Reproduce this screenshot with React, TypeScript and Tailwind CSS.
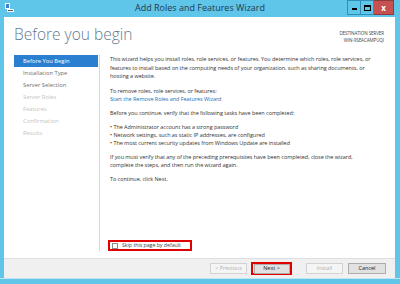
const navItems = [
  { label: "Before You Begin", state: "active" },
  { label: "Installation Type", state: "normal" },
  { label: "Server Selection", state: "normal" },
  { label: "Server Roles", state: "disabled" },
  { label: "Features", state: "disabled" },
  { label: "Confirmation", state: "disabled" },
  { label: "Results", state: "disabled" },
];

const App = () => {
  return (
    <div className="w-[400px] h-[284px] bg-[#5fc5e9] flex flex-col overflow-hidden font-['Open_Sans',sans-serif]">
      {/* Title bar */}
      <div className="h-[17px] flex items-start relative shrink-0">
        <div className="ml-[5px] mt-[3px] w-[9px] h-[9px] relative">
          <div className="absolute left-0 top-0 w-[5px] h-[6px] bg-[#3b7fd0] border border-white"></div>
          <div className="absolute left-[2px] bottom-0 w-[7px] h-[3px] bg-[#555] border border-white"></div>
        </div>
        <div className="absolute left-0 right-0 top-[2px] text-center text-[9px] leading-[12px] text-[#1f3b50]">
          Add Roles and Features Wizard
        </div>
        <div className="ml-auto mr-[6px] flex h-[15px]">
          <div className="w-[14px] h-[15px] border border-[#2f8fb6] flex items-end justify-center pb-[4px]">
            <div className="w-[5px] h-[2px] bg-black"></div>
          </div>
          <div className="w-[13px] h-[15px] border border-l-0 border-[#2f8fb6] flex items-center justify-center">
            <div className="w-[7px] h-[6px] border border-black border-t-2"></div>
          </div>
          <div className="w-[20px] h-[15px] bg-[#c75050] border border-l-0 border-[#8e3a3a] flex items-center justify-center text-[8px] font-bold text-white leading-none">
            x
          </div>
        </div>
      </div>

      {/* Body */}
      <div className="flex-1 ml-[4px] mr-[5px] bg-white flex flex-col min-h-0">
        <div className="flex-1 flex flex-col px-[10px] pt-[7px]">
          <div className="flex justify-between items-start">
            <h1 className="text-[15.5px] font-light text-[#5f7a92] leading-[20px]">Before you begin</h1>
            <div className="text-right text-[4.6px] leading-[6.5px] text-[#444] mt-[6px] mr-[1px] tracking-tight">
              <div>DESTINATION SERVER</div>
              <div>WIN-9SEACAMPUQI</div>
            </div>
          </div>

          <div className="flex flex-1 mt-[11px] pb-[7px]">
            {/* Sidebar */}
            <aside className="w-[86px] border-r border-[#d9d9d9] pr-[1px]">
              {navItems.map((item) => (
                <div
                  key={item.label}
                  className={
                    item.state === "active"
                      ? "h-[12px] pl-[9px] text-[5.8px] leading-[12px] bg-[#2a7fd0] text-white"
                      : item.state === "normal"
                      ? "h-[12px] pl-[9px] text-[5.8px] leading-[12px] text-[#6e6e6e]"
                      : "h-[12px] pl-[9px] text-[5.8px] leading-[12px] text-[#c4c4c4]"
                  }
                >
                  {item.label}
                </div>
              ))}
            </aside>

            {/* Main */}
            <main className="flex-1 pl-[10px] flex flex-col text-[5.5px] leading-[8.6px] text-[#333] whitespace-nowrap tracking-[-0.05px]">
              <p>This wizard helps you install roles, role services, or features. You determine which roles, role services, or</p>
              <p>features to install based on the computing needs of your organization, such as sharing documents, or</p>
              <p>hosting a website.</p>
              <p className="mt-[6px]">To remove roles, role services, or features:</p>
              <p className="text-[#1e6db5]">Start the Remove Roles and Features Wizard</p>
              <p className="mt-[5px]">Before you continue, verify that the following tasks have been completed:</p>
              <ul className="mt-[5px] leading-[8px]">
                <li>• The Administrator account has a strong password</li>
                <li>• Network settings, such as static IP addresses, are configured</li>
                <li>• The most current security updates from Windows Update are installed</li>
              </ul>
              <p className="mt-[6px]">If you must verify that any of the preceding prerequisites have been completed, close the wizard,</p>
              <p>complete the steps, and then run the wizard again.</p>
              <p className="mt-[5px]">To continue, click Next.</p>

              <div className="mt-auto -ml-[2px] w-[84px] h-[11px] border-2 border-[#e00000] flex items-center gap-[4px] pl-[2px]">
                <div className="w-[6px] h-[6px] border border-[#8a8a8a] bg-white"></div>
                <span className="text-[#444] text-[5.3px]">Skip this page by default</span>
              </div>
            </main>
          </div>
        </div>

        {/* Footer */}
        <div className="h-[20px] shrink-0 bg-[#f0f0f0] border-t border-[#dfdfdf] flex items-center justify-end pr-[9px] text-[5.5px]">
          <div className="w-[37px] h-[11px] border border-[#d2d2d2] bg-[#f5f5f5] text-[#b0b0b0] flex items-center justify-center">
            &lt; Previous
          </div>
          <div className="ml-[4px] w-[41px] h-[13px] border-2 border-[#e00000] flex items-center justify-center">
            <div className="w-[36px] h-[10px] border border-[#adadad] bg-[#e1e1e1] text-[#222] flex items-center justify-center">
              Next &gt;
            </div>
          </div>
          <div className="ml-[14px] w-[37px] h-[11px] border border-[#d2d2d2] bg-[#f5f5f5] text-[#b0b0b0] flex items-center justify-center">
            Install
          </div>
          <div className="ml-[5px] w-[38px] h-[11px] border border-[#adadad] bg-[#e1e1e1] text-[#222] flex items-center justify-center">
            Cancel
          </div>
        </div>
      </div>

      {/* Bottom frame */}
      <div className="h-[6px] shrink-0 border-t border-[#bfe6f5]"></div>
    </div>
  );
};

export default App;
